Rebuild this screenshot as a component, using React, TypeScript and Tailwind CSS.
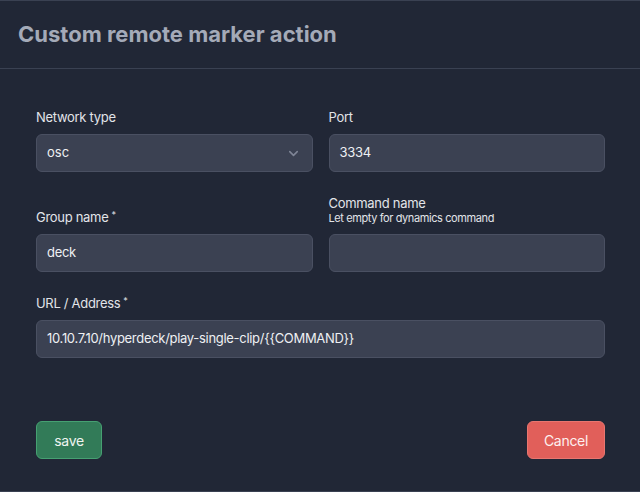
import { ChevronDown } from 'lucide-react'

function Label({ text, required }: { text: string; required?: boolean }) {
  return (
    <div className="text-[13px] leading-4 tracking-[-0.3px] text-[#e2e4e9]">
      {text}
      {required && <sup className="ml-[3px] text-[9px] text-[#e2e4e9]">*</sup>}
    </div>
  )
}

function Field({ value }: { value?: string }) {
  return (
    <div className="mt-[9px] h-[38px] flex items-center px-[10px] rounded-md bg-[#3b4152] border border-[#4a5062] text-[13px] tracking-[-0.3px] text-[#eef0f3]">
      {value}
    </div>
  )
}

export default function App() {
  return (
    <div
      className="w-[640px] h-[492px] bg-[#212736] border-t border-b border-[#3a4152] flex flex-col"
      style={{ fontFamily: 'Inter, "Noto Sans", sans-serif' }}
    >
      <div className="h-[68px] px-[18px] flex items-center border-b border-[#3a4152]">
        <h1 className="text-[22px] font-bold text-[#a4aab8]">Custom remote marker action</h1>
      </div>

      <div className="pl-[36px] pr-[35px] pt-[40px] flex-1 flex flex-col">
        <div className="grid grid-cols-2 gap-x-4">
          <div className="flex flex-col justify-end">
            <Label text="Network type" />
            <div className="mt-[9px] h-[38px] flex items-center justify-between pl-[10px] pr-[11px] rounded-md bg-[#3b4152] border border-[#4a5062] text-[13px] text-[#eef0f3]">
              <span>osc</span>
              <ChevronDown className="w-[15px] h-[15px] text-[#7f8596]" strokeWidth={2.5} />
            </div>
          </div>
          <div className="flex flex-col justify-end">
            <Label text="Port" />
            <Field value="3334" />
          </div>
        </div>

        <div className="grid grid-cols-2 gap-x-4 mt-[23px]">
          <div className="flex flex-col justify-end">
            <Label text="Group name" required />
            <Field value="deck" />
          </div>
          <div className="flex flex-col justify-end">
            <Label text="Command name" />
            <div className="text-[11px] leading-[14px] tracking-[-0.4px] text-[#e2e4e9]">Let empty for dynamics command</div>
            <Field />
          </div>
        </div>

        <div className="mt-[23px] flex flex-col">
          <Label text="URL / Address" required />
          <Field value="10.10.7.10/hyperdeck/play-single-clip/{{COMMAND}}" />
        </div>

        <div className="mt-[63px] flex justify-between">
          <button className="h-[38px] w-[66px] rounded-md bg-[#327b58] border border-[#46a072] text-[14px] tracking-[-0.3px] text-[#eef4f0]">
            save
          </button>
          <button className="h-[38px] w-[78px] rounded-md bg-[#e15f5a] border border-[#e87670] text-[14px] tracking-[-0.3px] text-[#fdf0ef]">
            Cancel
          </button>
        </div>
      </div>
    </div>
  )
}
